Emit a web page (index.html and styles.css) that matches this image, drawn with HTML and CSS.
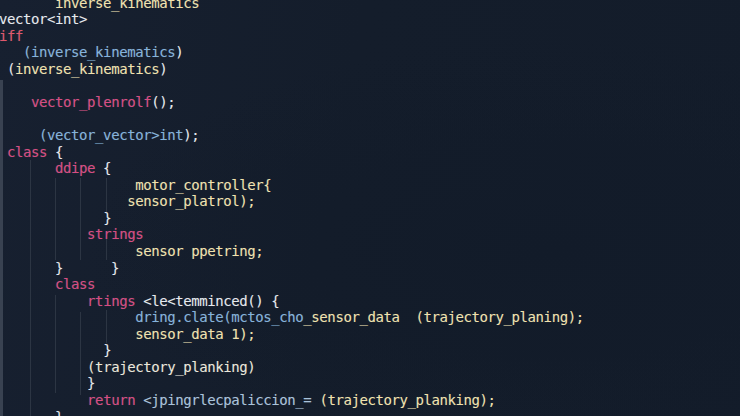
FILE: index.html
```html
<!DOCTYPE html>
<html lang="en">
<head>
<meta charset="utf-8">
<title>Editor</title>
<link rel="stylesheet" href="styles.css">
</head>
<body>
<main class="editor">
<pre class="code"><span class="y">       inverse_kinematics</span>
<span class="w">vector&lt;int&gt;</span>
<span class="r">iff</span>
   <span class="b">(inverse_kinematics</span><span class="w">)</span>
 <span class="w">(</span><span class="y">inverse_kinematics</span><span class="w">)</span>

    <span class="k">vector_plenrolf</span><span class="w">();</span>

     <span class="b">(vector_vector&gt;int</span><span class="w">);</span>
 <span class="k">class</span><span class="w"> {</span>
       <span class="k">ddipe</span><span class="w"> {</span>
                 <span class="y">motor_controller{</span>
                <span class="y">sensor_platrol);</span>
             <span class="w">}</span>
           <span class="k">strings</span>
                 <span class="y">sensor ppetring;</span>
       <span class="w">}      }</span>
       <span class="k">class</span>
           <span class="k">rtings</span><span class="w"> &lt;le&lt;temminced() {</span>
                 <span class="b">dring.clate(mctos_cho</span><span class="y">_sensor_data</span>  <span class="y">(trajectory_planing);</span>
                 <span class="y">sensor_data 1);</span>
             <span class="w">}</span>
           <span class="c">(trajectory_planking)</span>
           <span class="w">}</span>
           <span class="k">return</span> <span class="l">&lt;jpingrlecpaliccion_=</span> <span class="y">(trajectory_planking);</span>
       <span class="w">}</span></pre>
</main>
</body>
</html>
```

FILE: styles.css
```css
html, body {
  margin: 0;
  padding: 0;
  height: 100%;
  overflow: hidden;
  background: #141d2b;
}

.editor {
  width: 740px;
  height: 416px;
  overflow: hidden;
  background:
    linear-gradient(#394251, #394251) 0 80px / 3px 340px no-repeat,
    linear-gradient(#2c3543, #2c3543) 30px 160px / 1px 260px no-repeat,
    linear-gradient(#2c3543, #2c3543) 55px 178px / 1px 82px no-repeat,
    linear-gradient(#2c3543, #2c3543) 80px 178px / 1px 82px no-repeat,
    linear-gradient(#2c3543, #2c3543) 106px 178px / 1px 34px no-repeat,
    linear-gradient(#2c3543, #2c3543) 106px 232px / 1px 28px no-repeat,
    linear-gradient(#2c3543, #2c3543) 55px 295px / 1px 98px no-repeat,
    linear-gradient(#2c3543, #2c3543) 80px 312px / 1px 83px no-repeat,
    linear-gradient(#2c3543, #2c3543) 106px 310px / 1px 33px no-repeat,
    radial-gradient(ellipse at 75% 60%, #121b29 0%, rgba(18, 27, 41, 0) 60%),
    linear-gradient(100deg, #172030 0%, #141d2b 45%, #131c2a 100%);
}

.code {
  margin: -5.5px 0 0 -1px;
  font-family: "DejaVu Sans Mono", "Liberation Mono", monospace;
  font-size: 14px;
  letter-spacing: -0.42px;
  line-height: 16.56px;
  color: #e6e9ee;
  white-space: pre;
  text-shadow: 0 0 1px rgba(255, 255, 255, 0.18);
}

.k { color: #d84c82; }
.r { color: #e0576c; }
.y { color: #f1e2ad; }
.b { color: #84b3dc; }
.w { color: #e6e9ee; }
.c { color: #ebe7da; }
.l { color: #a9c3dc; }
```
